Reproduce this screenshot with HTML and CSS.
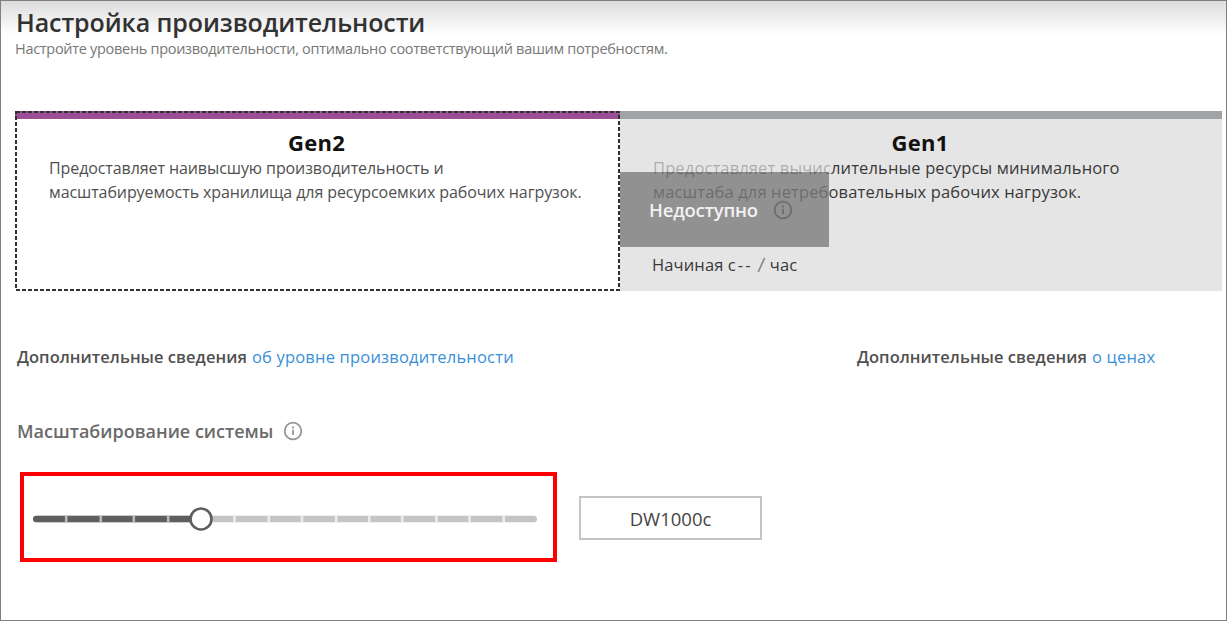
FILE: index.html
```
<!DOCTYPE html>
<html lang="ru"><head><meta charset="utf-8"><title>Настройка производительности</title>
<link rel="stylesheet" href="styles.css"></head><body>
<main class="panel">
<header class="head"><h1 class="title">Настройка производительности</h1>
<p class="subtitle">Настройте уровень производительности, оптимально соответствующий вашим потребностям.</p></header>
<section class="tiers">
<article class="tier gen2"><svg class="dash" width="605" height="180"><rect x="1" y="1" width="603" height="178"/></svg>
<h2>Gen2</h2><p class="desc">Предоставляет наивысшую производительность и<br>масштабируемость хранилища для ресурсоемких рабочих нагрузок.</p></article>
<article class="tier gen1"><h2>Gen1</h2>
<p class="desc"><span class="faded">Предоставляет вычис</span>лительные ресурсы минимального<br><span class="faded">масштаба для нетреб</span>овательных рабочих нагрузок.</p>
<div class="unavailable"><span>Недоступно</span><svg class="info" width="20" height="20" viewBox="0 0 20 20"><circle cx="10" cy="10" r="8.3"/><path d="M10 8.7v5.3M10 5.6v1.8"/></svg></div>
<p class="price"><span>Начиная с</span><span class="amount">--</span><svg class="slash" width="9" height="16" viewBox="0 0 9 16"><path d="M1.2 15L7.6 1"/></svg><span>час</span></p></article>
</section>
<nav class="links"><p><b>Дополнительные сведения</b><a>об уровне производительности</a></p><p class="second"><b>Дополнительные сведения</b><a>о ценах</a></p></nav>
<h3 class="scale">Масштабирование системы<svg class="info" width="20" height="20" viewBox="0 0 20 20"><circle cx="10" cy="10" r="8.3"/><path d="M10 8.7v5.3M10 5.6v1.8"/></svg></h3>
<div class="controls"><div class="frame"><svg class="slider" width="504" height="24">
<path class="rail" d="M3.2 12H500.8"/><path class="rail on" d="M3.2 12H167"/>
<path class="gaps used" d="M33.2 8.5v7M67.8 8.5v7M100.8 8.5v7M135.2 8.5v7"/>
<path class="gaps" d="M201.5 8.5v7M235.8 8.5v7M269 8.5v7M303.2 8.5v7M336.2 8.5v7M369.2 8.5v7M403.5 8.5v7M436.5 8.5v7M470.7 8.5v7"/>
<circle cx="168" cy="12" r="10.5"/></svg></div><div class="value">DW1000c</div></div>
</main>
</body></html>
```
FILE: styles.css
```
*{box-sizing:border-box}
body,h1,h2,h3,p{margin:0}
body{font-family:"Open Sans","Noto Sans",sans-serif;color:#505050}
.panel{width:1227px;height:621px;border:1px solid #808080;padding:0 4px 0 14px;background:linear-gradient(#dcdcdc,#fff 34px);overflow:hidden}
.head{height:110px}
.title{padding:4px 0 0 1px;font-size:25px;line-height:34px;font-weight:650;letter-spacing:-.1px;color:#323232;white-space:nowrap}
.subtitle{font-size:14.5px;line-height:20px;letter-spacing:-.3px;color:#777}
.tiers{display:flex;height:180px}
.tier{position:relative;width:605px;padding:10px 34px 0;flex:none;border-top:8px solid #9b4f96;background:#fff}
.gen1{width:602px;background:#e5e5e5;border-color:#a0a4a7;padding:10px 33px 0}
.dash{position:absolute;left:0;top:-8px;fill:none;stroke:#303030;stroke-width:2;stroke-dasharray:4 2}
h2{padding:0 2px 1px 0;font-size:22px;line-height:26px;font-weight:700;letter-spacing:.25px;color:#111;text-align:center}
.desc{position:relative;z-index:1;font-size:16px;line-height:24px;letter-spacing:-.09px;white-space:nowrap}
.gen1 .desc{font-size:16.5px;letter-spacing:.13px}
.gen1 .desc,.price{color:#393939}
.faded{color:rgba(0,0,0,.27)}
.unavailable{position:absolute;left:0;top:53px;width:209px;height:75px;background:#919191;display:flex;align-items:center;gap:15px;padding:1px 0 0 29px;color:#f2f2f2;font-size:18.5px;line-height:24px;letter-spacing:-.2px;font-weight:600}
.info{fill:none;stroke:#969696;stroke-width:1.8}
.unavailable .info{stroke:#6d6d6d}
.price{display:flex;align-items:center;padding-top:49px;margin-left:-1px;font-size:16.5px;letter-spacing:.12px;line-height:24px;white-space:nowrap}
.amount{width:15px;margin:0 4px 0 2px;letter-spacing:2.2px}
.slash{fill:none;stroke:#888;stroke-width:1.7;margin-right:4px}
.links{display:flex;margin-top:54px;padding-left:2px;font-size:16.5px;line-height:24px}
.links p{display:flex;gap:5px;width:840px;white-space:nowrap}
.links .second{width:365px}
b{font-weight:600;letter-spacing:.04px}a{color:#3a90d8;letter-spacing:.19px}
.scale{display:flex;align-items:center;gap:10px;padding:48px 0 0 2px;font-size:18px;line-height:28px;font-weight:600;color:#6a6a6a}
.controls{display:flex;align-items:center;gap:22px;padding:27px 0 0 5px}
.frame{width:537px;height:90px;border:4.5px solid red;padding:30.5px 0 0 9px}
.slider{display:block}
.rail{stroke:#c5c4c2;stroke-width:6.4;stroke-linecap:round;fill:none}
.on{stroke:#5f5e5d}
.gaps{stroke:#ececec;stroke-width:2.6;fill:none}
.used{stroke:#bbb}
.slider circle{fill:#fff;stroke:#5f5e5d;stroke-width:2.6}
.value{width:183px;height:44px;margin-top:2px;border:2px solid #c4c4c4;background:#fff;display:flex;align-items:center;justify-content:center;font-size:18.5px;color:#444}
```
